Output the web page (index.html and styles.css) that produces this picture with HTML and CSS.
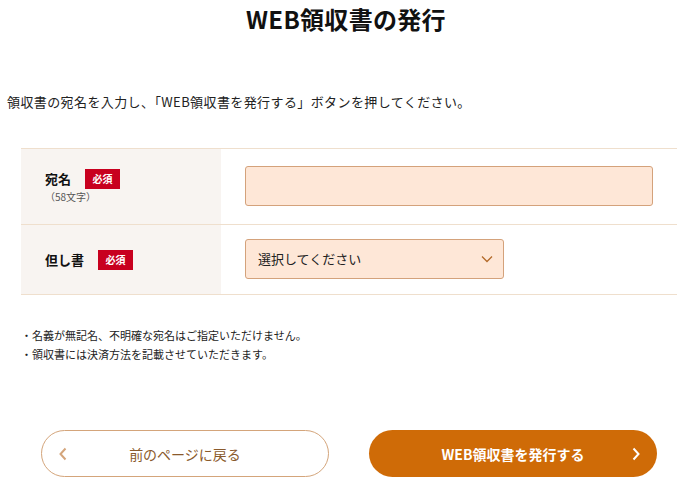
FILE: index.html
```html
<!DOCTYPE html>
<html lang="ja">
<head>
<meta charset="utf-8">
<title>WEB領収書の発行</title>
<link rel="stylesheet" href="styles.css">
</head>
<body>
<div class="page">
  <h1 class="title">WEB領収書の発行</h1>
  <p class="lead">領収書の宛名を入力し、「WEB領収書を発行する」ボタンを押してください。</p>

  <div class="form">
    <div class="row row-name">
      <div class="label">
        <div class="label-head"><span class="label-text">宛名</span><span class="badge">必須</span></div>
        <div class="label-note">（58文字）</div>
      </div>
      <div class="field">
        <input class="text-input" type="text" aria-label="宛名">
      </div>
    </div>
    <div class="row row-note">
      <div class="label">
        <div class="label-head"><span class="label-text">但し書</span><span class="badge">必須</span></div>
      </div>
      <div class="field">
        <div class="select">
          <span class="select-text">選択してください</span>
          <svg class="select-arrow" width="12" height="8" viewBox="0 0 12 8"><polyline points="1,1.5 6,6.5 11,1.5" fill="none" stroke="#b36a2a" stroke-width="1.3"/></svg>
        </div>
      </div>
    </div>
  </div>

  <ul class="notes">
    <li>・名義が無記名、不明確な宛名はご指定いただけません。</li>
    <li>・領収書には決済方法を記載させていただきます。</li>
  </ul>

  <div class="actions">
    <a class="btn btn-back" href="#">
      <svg class="chev" width="10" height="14" viewBox="0 0 10 14"><polyline points="7.5,1.5 2.5,7 7.5,12.5" fill="none" stroke="#d4a57b" stroke-width="2"/></svg>
      <span class="btn-text">前のページに戻る</span>
      <span></span>
    </a>
    <a class="btn btn-issue" href="#">
      <span></span>
      <span class="btn-text">WEB領収書を発行する</span>
      <svg class="chev chev-right" width="10" height="14" viewBox="0 0 10 14"><polyline points="2.5,1.5 7.5,7 2.5,12.5" fill="none" stroke="#ffffff" stroke-width="2"/></svg>
    </a>
  </div>
</div>
</body>
</html>
```

FILE: styles.css
```css
* { box-sizing: border-box; }
html, body { margin: 0; padding: 0; background: #fff; }
body {
  font-family: "Noto Sans CJK JP", "Noto Sans", sans-serif;
  color: #222;
  width: 692px;
}
.page { width: 692px; }
.title {
  margin: 0;
  text-align: center;
  font-size: 24px;
  line-height: 38px;
  font-weight: 700;
  color: #111;
  letter-spacing: 0.3px;
}
.lead {
  margin: 54px 0 0 7px;
  font-size: 13px;
  line-height: 20px;
  color: #222;
  letter-spacing: 0.4px;
}
.form {
  margin: 36px 0 0 21px;
  width: 656px;
  border-top: 1px solid #efdfcd;
}
.row {
  display: flex;
  border-bottom: 1px solid #efdfcd;
}
.label {
  width: 200px;
  flex: none;
  background: #f8f4f1;
  padding-left: 24px;
  display: flex;
  flex-direction: column;
  justify-content: center;
}
.label-head {
  display: flex;
  align-items: center;
  height: 20px;
}
.label-text {
  font-size: 13px;
  font-weight: 700;
  line-height: 20px;
  color: #111;
  margin-right: 14px;
}
.badge {
  display: inline-flex;
  align-items: center;
  justify-content: center;
  width: 35px;
  height: 20px;
  background: #c8001f;
  color: #fff;
  font-size: 10px;
  font-weight: 700;
  line-height: 1;
}
.label-note {
  font-size: 10px;
  line-height: 15px;
  color: #555;
}
.field {
  flex: 1;
  padding-left: 24px;
  display: flex;
  align-items: center;
}
.row-name .field { padding-top: 17px; padding-bottom: 18px; }
.row-note .field { padding-top: 14px; padding-bottom: 15px; }
.text-input {
  display: block;
  width: 408px;
  height: 40px;
  margin: 0;
  background: #fee7d7;
  border: 1px solid #d4a27b;
  border-radius: 3px;
  font: inherit;
  outline: none;
}
.select {
  width: 259px;
  height: 40px;
  background: #fee7d7;
  border: 1px solid #d4a27b;
  border-radius: 3px;
  display: flex;
  align-items: center;
  justify-content: space-between;
  padding: 0 10px 0 12px;
}
.select-text {
  font-size: 13px;
  line-height: 20px;
  color: #222;
}
.notes {
  list-style: none;
  margin: 31px 0 0 21px;
  padding: 0;
}
.notes li {
  font-size: 11px;
  line-height: 19px;
  color: #222;
}
.actions {
  margin: 66px 0 0 21px;
  width: 656px;
  padding: 0 20px;
  display: flex;
  gap: 40px;
}
.btn {
  width: 288px;
  height: 47px;
  border-radius: 24px;
  display: grid;
  grid-template-columns: 1fr auto 1fr;
  align-items: center;
  padding: 0 16px;
  text-decoration: none;
  font-size: 14px;
  line-height: 20px;
}
.btn-back {
  background: #fff;
  border: 1px solid #d4a57b;
  color: #8a5a2c;
}
.btn-issue {
  background: #cf6b07;
  color: #fff;
  font-weight: 700;
}
.chev { display: block; }
.chev-right { justify-self: end; }
```
